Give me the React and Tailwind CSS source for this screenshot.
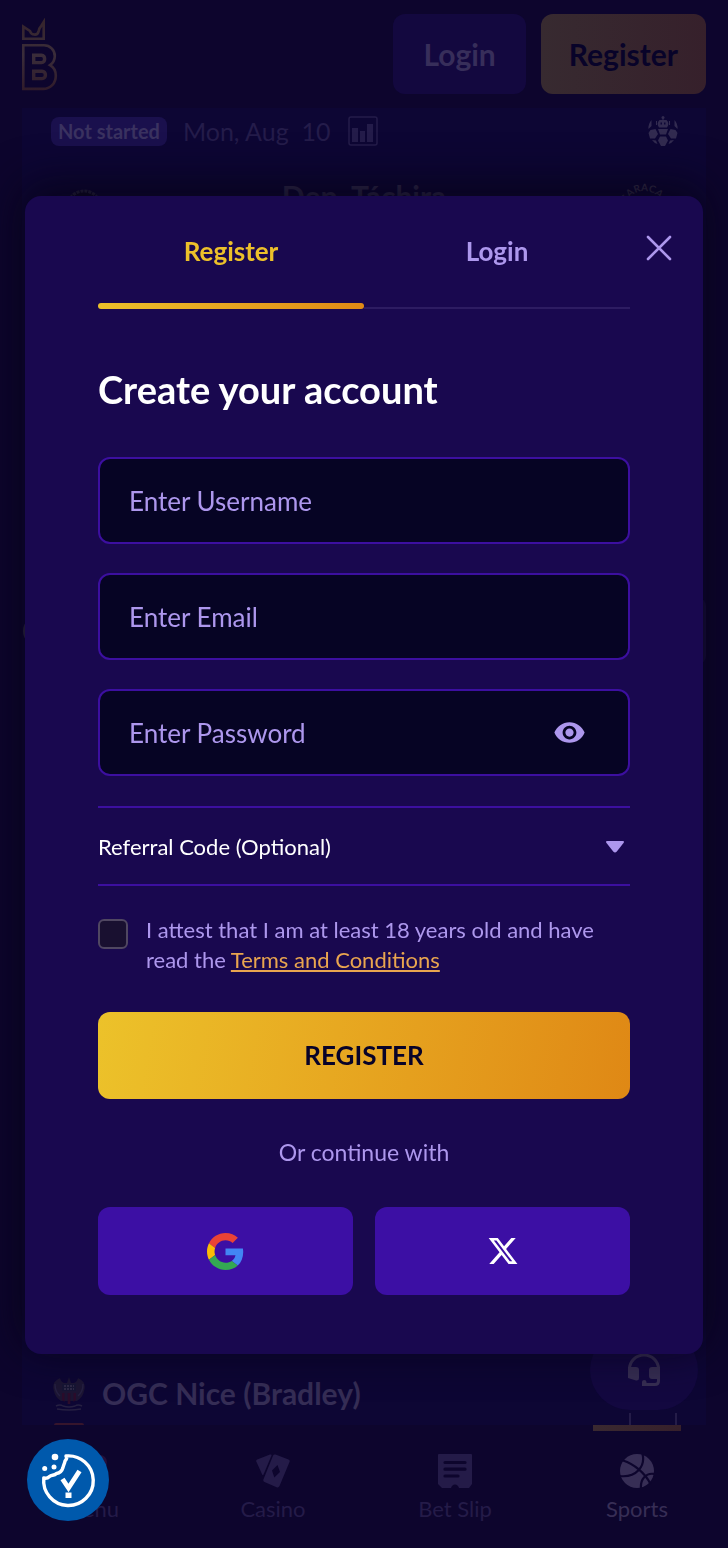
import { useState } from 'react';
import { MdVisibility, MdVisibilityOff } from 'react-icons/md';
import { FaXTwitter } from 'react-icons/fa6';

function BrandLogo() {
  return (
    <svg width="36" height="73" viewBox="0 0 36 73" fill="none" aria-label="Home">
      <defs>
        <linearGradient id="brand" x1="0" y1="0" x2="0" y2="73" gradientUnits="userSpaceOnUse">
          <stop offset="0" stopColor="#35242b" />
          <stop offset="0.5" stopColor="#3a2d3a" />
          <stop offset="1" stopColor="#301b2a" />
        </linearGradient>
      </defs>
      <g stroke="url(#brand)">
        <path strokeWidth="2.6" d="M1.300 20.700V8.600L8 13c1.200 4.600 7.600 4.800 8.600.4.400-2.600 1.200-4 2.600-5.400L21.700 4v16.700z" />
        <path strokeWidth="2.6" d="M1.300 27.300H22c6 0 10.800 4.600 10.800 10.600 0 4-1.800 7-4.800 9.200 3.600 2 5.800 5.800 5.800 10.600 0 7.600-5.200 13.200-12.800 13.200H1.300z" />
        <path strokeWidth="3.400" d="M11.700 37.200h7.800c4.200 0 4.200 7.400 0 7.400h-7.800zM11.700 53.200h8.300c4.600 0 4.600 7.400 0 7.400h-8.300z" />
      </g>
    </svg>
  );
}

function RobotBallIcon() {
  return (
    <svg width="30" height="30" viewBox="0 0 30 30" fill="#322b50">
      <circle cx="15" cy="1.500" r="1.500" />
      <path d="M14.500 2h1v3h-1zM11.500 4h7q3.500 3.500.500 7.500h-8q-3-4 .500-7.500zM8 5h1v4H8zM21 5h1v4h-1z" />
      <path d="M3.500 4v6L.5 13Q0 8 3.500 4zM26.500 4v6l3 3Q30 8 26.500 4zM10 13h10l-2 5.500h-6zM2.500 14l5-1 2.500 5-3 4.500H2L.5 17zM27.500 14l-5-1-2.500 5 3 4.500h5l1.500-5.500zM12 20.500h6l2 4-3 5.500h-4l-3-5.500zM4 24l4 .5 1.500 3.500Q6 27 4 24zM26 24l-4 .5-1.500 3.500Q24 27 26 24z" />
      <path fill="#0d0636" d="M12.500 6.500h1.500v2h-1.500zM16 6.500h1.500v2H16z" />
    </svg>
  );
}

function StatsIcon() {
  return (
    <svg width="30" height="30" viewBox="0 0 30 30" fill="#241c4a">
      <rect x="1" y="1" width="28" height="28" rx="2" fill="none" stroke="#241c4a" strokeWidth="1.500" />
      <path d="M4 12h6v14H4zM12 15h5v11h-5zM19 8h6v18h-6z" />
    </svg>
  );
}

function CasinoIcon() {
  return (
    <svg width="34" height="34" viewBox="0 0 34 34">
      <path fill="currentColor" d="M1.200 5.500 14 .500q2-.500 1.500 1L7.500 20.500q-.600 1-1.300 0L.300 7.500q-.500-1.300.900-2z" />
      <path fill="currentColor" d="M19.500.600 32.500 5.500q1.800.800 1 2.600L23.500 32q-.900 2-2.900 1.200L8.500 28q-1.800-.900-1-2.800L17 1.700q.700-1.700 2.500-1.100z" />
      <path fill="#0d052d" d="m21.500 11-5.500 5.500 2.300 7L24 18z" />
    </svg>
  );
}

function BetSlipIcon() {
  return (
    <svg width="34" height="34" viewBox="0 0 34 34">
      <path fill="currentColor" d="M1 0h32q1 0 1 1v29l-3 4H21q-1-3.500-4-3.500T13 34H4l-4-4V1q0-1 1-1z" />
      <path stroke="#0d052d" strokeWidth="3.200" strokeLinecap="round" d="M7 8.500h20M7 15.200h20M7 22h13" />
    </svg>
  );
}

function SportsIcon() {
  return (
    <svg width="34" height="34" viewBox="0 0 34 34" fill="none">
      <circle cx="17" cy="17" r="17" fill="currentColor" />
      <path stroke="#0d052d" strokeWidth="2.200" d="M3 6.500C14 10 25 19 30.500 30M22.500 0c3 12-6 24-23 22M34.500 20C26 18.500 20 25 21 35" />
    </svg>
  );
}

function MenuIcon() {
  return (
    <svg width="34" height="34" viewBox="0 0 34 34">
      <path stroke="currentColor" strokeWidth="3" strokeLinecap="round" d="M4 9h18M4 18h20M4 27h20" />
      <circle cx="26" cy="8" r="7" fill="#25103a" />
    </svg>
  );
}

function HeadsetIcon() {
  return (
    <svg width="32" height="34" viewBox="0 0 32 34" fill="none">
      <path stroke="#372e53" strokeWidth="3" d="M1.500 20v-4a14.500 14 0 0 1 29 0v12q0 3.500-3.500 3.500H15" />
      <path fill="#372e53" d="M0 14h8q3 0 3 3v8q0 3-3 2.500L0 25zM32 14h-8q-3 0-3 3v6q0 3 3 3h8zM14 29q0-2 2.200-2t2.300 2v4H14z" />
    </svg>
  );
}

function CrestIcon() {
  return (
    <svg width="32" height="36" viewBox="0 0 32 36">
      <path fill="#1c1533" d="M7 3Q-2 7 1 16q1 6 7 10h16q6-4 7-10 3-9-6-13-1 4-4 5h-3l-2-6-2 6h-3Q8 7 7 3z" />
      <path fill="#161534" d="M9 9h14v7H9z" />
      <path fill="#2b0c2b" d="M9 18h2.500v9L9 25zM14.700 18h2.600v11h-2.600zM20.500 18H23v7l-2.500 2z" />
      <path stroke="#262042" fill="none" strokeWidth="1.500" d="M3 31q4-2 7 0 6 2 12 0 3-2 7 0M4 34q12 2 24 0M2 9q0 8 5 12M30 9q0 8-5 12" />
      <path stroke="#37304e" strokeWidth="1.500" strokeDasharray="2 1" d="M11 11h10M11 14h10" />
    </svg>
  );
}

function GoogleIcon() {
  return (
    <svg width="37" height="37" viewBox="0 0 48 48">
      <path fill="#EA4335" d="M24 9.500c3.540 0 6.710 1.220 9.210 3.600l6.850-6.850C35.900 2.380 30.470 0 24 0 14.620 0 6.510 5.380 2.560 13.220l7.980 6.190C12.430 13.720 17.740 9.500 24 9.500z" />
      <path fill="#4285F4" d="M46.980 24.550c0-1.570-.15-3.090-.38-4.550H24v9.020h12.940c-.58 2.960-2.260 5.480-4.780 7.180l7.730 6c4.510-4.180 7.090-10.360 7.090-17.650z" />
      <path fill="#FBBC05" d="M10.530 28.590c-.48-1.450-.76-2.990-.76-4.590s.27-3.140.76-4.590l-7.980-6.190C.92 16.460 0 20.120 0 24c0 3.880.92 7.540 2.560 10.780l7.970-6.190z" />
      <path fill="#34A853" d="M24 48c6.480 0 11.930-2.130 15.890-5.810l-7.730-6c-2.150 1.450-4.920 2.300-8.160 2.300-6.260 0-11.570-4.220-13.470-9.910l-7.980 6.190C6.510 42.620 14.620 48 24 48z" />
    </svg>
  );
}

function CookieIcon() {
  return (
    <svg width="56" height="56" viewBox="0 0 56 56" fill="none">
      <path
        stroke="#fff"
        strokeWidth="3.400"
        strokeLinejoin="round"
        d="M26 4c1.500 2 .500 3.500-1 5-.500 3-1.500 4-2 6.500-1 3.500-3 5.500-6.500 6-2.500 2.500-5 1-7 3-1.500 1.500-3.500 2-5.700 1.500A24.800 24.800 0 1 0 26 4z"
      />
      <circle cx="15" cy="5" r="3.300" fill="#fff" />
      <circle cx="4.700" cy="16.600" r="2.500" fill="#fff" />
      <circle cx="14" cy="15" r="2.500" fill="#fff" />
      <path stroke="#fff" strokeWidth="4.800" d="m22.500 27 6 9L39.500 19" />
      <path fill="#fff" d="M25.500 40.500h6v5.500h-6z" />
    </svg>
  );
}

const navItems = [
  { label: 'Menu', icon: MenuIcon },
  { label: 'Casino', icon: CasinoIcon },
  { label: 'Bet Slip', icon: BetSlipIcon },
  { label: 'Sports', icon: SportsIcon, active: true },
];

function SiteHeader() {
  return (
    <header className="flex h-[108px] items-center justify-between px-[22px]">
      <a href="#home" aria-label="Home">
        <BrandLogo />
      </a>
      <div className="flex gap-[15px] text-[30px] font-bold">
        <button className="h-20 rounded-xl bg-[#13083f] px-[30px] text-[#372e5a]">Login</button>
        <button className="h-20 rounded-xl bg-linear-to-r from-[#372a30] to-[#36202b] px-7 text-[#080329]">
          Register
        </button>
      </div>
    </header>
  );
}

function MatchFeed() {
  return (
    <main className="mx-[22px] flex flex-1 flex-col bg-[#0d0634]">
      <div className="flex items-center pt-2 pr-7 pl-[29px]">
        <span className="rounded-lg bg-[#1a104d] px-[7px] text-[20px] leading-[29px] font-bold text-[#3a3260]">
          Not started
        </span>
        <span className="ml-4 text-[25px] leading-[30px] text-[#241c4a]">Mon, Aug&nbsp; 10</span>
        <span className="ml-[18px]">
          <StatsIcon />
        </span>
        <span className="ml-auto">
          <RobotBallIcon />
        </span>
      </div>
      <div className="mt-[30px] flex items-start justify-between px-8">
        <svg width="60" height="60" viewBox="0 0 60 60">
          <circle cx="30" cy="32" r="17" fill="#0a0520" stroke="#2a2640" strokeWidth="3" strokeDasharray="3 1" />
        </svg>
        <span className="text-[30px] leading-10 font-bold text-[#332c4e]">Dep. Táchira</span>
        <svg width="60" height="60" viewBox="0 0 60 60">
          <path id="crest-arc" fill="none" d="M11 34a19 19 0 0 1 38 0" />
          <text fill="#39324c" fontSize="10" fontWeight="700" textAnchor="middle">
            <textPath href="#crest-arc" startOffset="50%">CARACAS</textPath>
          </text>
        </svg>
      </div>
      <div className="mt-[362px] mb-auto flex items-center justify-between pl-px">
        <span className="size-8 rounded-full bg-[#322c48]" />
        <span className="h-[66px] w-10 rounded-lg bg-[#180f40]" />
      </div>
      <div className="flex items-center pl-[31px]">
        <CrestIcon />
        <span className="ml-[17px] text-[30px] leading-10 font-bold text-[#352d55]">OGC Nice (Bradley)</span>
      </div>
      <div className="flex items-end justify-between pr-[29px] pl-8">
        <span className="h-[2px] w-[30px] rounded-t bg-[#36152c]" />
        <span className="h-3 w-[48px] border-x-2 border-[#241c48]" />
      </div>
    </main>
  );
}

function BottomNav() {
  return (
    <nav className="grid h-[123px] grid-cols-4">
      {navItems.map(({ label, icon: Icon, active }) => (
        <a
          key={label}
          href={`#${label}`}
          className={`flex flex-col items-center text-[22px] leading-7 ${active ? 'text-[#372e55]' : 'text-[#241b48]'}`}
        >
          <span className={`h-[6px] w-[88px] ${active ? 'bg-linear-to-r from-[#3a2930] to-[#36202b]' : ''}`} />
          <span className="mt-[23px] mb-[7px]">
            <Icon />
          </span>
          {label}
        </a>
      ))}
    </nav>
  );
}

function Field({ id, label, type = 'text', children }) {
  return (
    <div className="relative">
      <input
        id={id}
        type={type}
        placeholder={label}
        aria-label={label}
        className="h-[87px] w-full rounded-xl border-2 border-[#3c0fa0] bg-[#060424] px-[29px] text-[26px] text-white outline-none placeholder:text-[#ad97ed]"
      />
      {children}
    </div>
  );
}

function RegisterDialog({ onClose }) {
  const [tab, setTab] = useState('register');
  const [showPassword, setShowPassword] = useState(false);
  const [showReferral, setShowReferral] = useState(false);

  return (
    <section
      role="dialog"
      aria-modal="true"
      aria-labelledby="dialog-title"
      className="relative w-full max-w-[680px] rounded-2xl bg-[#19084f] px-[73px] pb-[59px] shadow-[0_-8px_44px_4px_rgba(7,3,24,0.85)]"
    >
      <button onClick={onClose} aria-label="Close" className="absolute top-[37px] right-[29px] p-px">
        <svg width="28" height="28" viewBox="0 0 28 28" stroke="#ad97ed" strokeWidth="2.600" strokeLinecap="round">
          <path d="m3 3 22 22M25 3 3 25" />
        </svg>
      </button>

      <div role="tablist" className="grid h-[113px] grid-cols-2 text-[26px] leading-8 font-bold">
        {['Register', 'Login'].map((name) => {
          const selected = tab === name.toLowerCase();
          return (
            <button
              key={name}
              role="tab"
              aria-selected={selected}
              onClick={() => setTab(name.toLowerCase())}
              className={`flex flex-col justify-end ${selected ? 'text-[#ecc02a]' : 'text-[#ad97ed]'}`}
            >
              <span className="mb-9 w-full text-center">{name}</span>
              <span className="flex h-[6px] w-full items-end">
                <span
                  className={
                    selected
                      ? 'h-[6px] w-full rounded-full bg-linear-to-r from-[#ecc02a] to-[#e08a15]'
                      : 'h-[2px] w-full bg-[#2d1c62]'
                  }
                />
              </span>
            </button>
          );
        })}
      </div>

      <h1 id="dialog-title" className="mt-14 text-[38px] leading-[48px] font-bold text-white">
        Create your account
      </h1>

      <form onSubmit={(e) => e.preventDefault()} className="mt-11">
        <div className="flex flex-col gap-[29px]">
          <Field id="username" label="Enter Username" />
          <Field id="email" label="Enter Email" type="email" />
          <Field id="password" label="Enter Password" type={showPassword ? 'text' : 'password'}>
            <button
              type="button"
              aria-label="Show password"
              onClick={() => setShowPassword(!showPassword)}
              className="absolute inset-y-0 right-[44px] text-[#ad97ed]"
            >
              {showPassword ? <MdVisibilityOff size={33} /> : <MdVisibility size={33} />}
            </button>
          </Field>
        </div>

        <div className="mt-[30px] border-y-2 border-[#3c0fa0]">
          <button
            type="button"
            aria-expanded={showReferral}
            onClick={() => setShowReferral(!showReferral)}
            className="flex h-[76px] w-full items-center justify-between pr-[5px] text-[22px] text-white"
          >
            Referral Code (Optional)
            <svg width="20" height="13" viewBox="0 0 20 13" fill="#ad97ed">
              <path d="M2.500 1h15q2.500 0 1 2l-6.700 8.600q-1.800 1.800-3.600 0L1.500 3Q0 1 2.500 1z" />
            </svg>
          </button>
          {showReferral && (
            <div className="pb-6">
              <Field id="referral" label="Enter Referral Code" />
            </div>
          )}
        </div>

        <div className="mt-[29px] flex items-start gap-[18px]">
          <input
            id="attest"
            type="checkbox"
            className="mt-1 size-[30px] shrink-0 appearance-none rounded-md border-2 border-[#504761] bg-[#191030] checked:bg-[#ad97ed]"
          />
          <label htmlFor="attest" className="text-[22px] leading-[30px] text-[#ad97ed]">
            I attest that I am at least 18 years old and have read the{' '}
            <a href="#terms" className="text-[#e9a54f] underline underline-offset-2">
              Terms and Conditions
            </a>
          </label>
        </div>

        <button
          type="submit"
          className="mt-[37px] h-[87px] w-full rounded-xl bg-linear-100 from-[#ecc22a] to-[#df8815] text-[26px] font-bold text-[#080329]"
        >
          REGISTER
        </button>
      </form>

      <p className="mt-[37px] text-center text-[23px] leading-8 text-[#ad97ed]">Or continue with</p>

      <div className="mt-[39px] grid grid-cols-2 gap-[22px]">
        <button aria-label="Continue with Google" className="flex h-[88px] items-center justify-center rounded-xl bg-[#3c0fa4]">
          <GoogleIcon />
        </button>
        <button aria-label="Continue with X" className="flex h-[88px] items-center justify-center rounded-xl bg-[#3c0fa4] text-white">
          <FaXTwitter size={32} />
        </button>
      </div>
    </section>
  );
}

export default function App() {
  const [open, setOpen] = useState(true);

  return (
    <div className="flex min-h-screen flex-col bg-[#0d052d] font-['Lato',sans-serif]">
      <SiteHeader />
      <MatchFeed />
      <BottomNav />

      <button
        aria-label="Support chat"
        className="fixed right-[30px] bottom-[138px] flex h-20 w-[108px] items-center justify-center rounded-[40px] bg-[#130840]"
      >
        <HeadsetIcon />
      </button>

      {open && (
        <div className="absolute inset-x-0 top-0 flex min-h-screen items-center justify-center px-[25px] pt-[2px]">
          <RegisterDialog onClose={() => setOpen(false)} />
        </div>
      )}

      <button
        aria-label="Cookie settings"
        className="fixed bottom-[27px] left-[27px] flex size-[82px] items-center justify-center rounded-full bg-[#0059ac]"
      >
        <CookieIcon />
      </button>
    </div>
  );
}
